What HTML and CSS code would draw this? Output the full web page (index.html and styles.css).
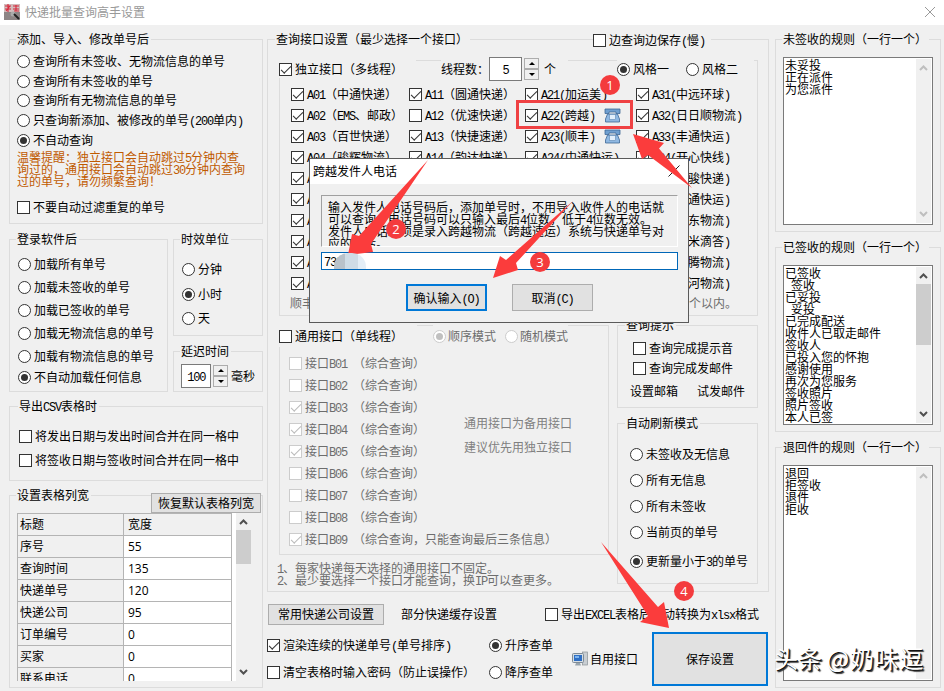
FILE: index.html
```html
<!DOCTYPE html>
<html lang="zh-CN">
<head>
    <meta charset="UTF-8">
    <title>快递批量查询高手设置</title>
    <link rel="stylesheet" href="styles.css">
</head>
<body>
    <header class="titlebar">
        <svg class="app-icon" width="16" height="16" viewBox="0 0 16 16">
            <rect width="16" height="16" fill="#8d8585"/>
            <rect width="16" height="8" fill="#d3bcbc"/>
            <path d="M1 2h6M4 0v8M1 5h6M2 7l4-5M9 2h6M12 1v6M9 5h6M10 7h5" stroke="#d8283c" stroke-width="1.1"/>
            <circle cx="9" cy="10" r="2.5" fill="#aaa"/>
            <path d="M10 10l5 5" stroke="#222" stroke-width="2"/>
        </svg>
        <span class="title">快递批量查询高手设置</span>
        <svg class="close" width="12" height="12" viewBox="0 0 12 12"><path d="M1 1l10 10M11 1L1 11" stroke="#999"/></svg>
    </header>

    <main>
        <!-- Left column -->
        <div class="col left">
            <fieldset class="after-add">
                <legend>添加、导入、修改单号后</legend>
                <label class="opt"><i class="radio"></i>查询所有未签收、无物流信息的单号</label>
                <label class="opt"><i class="radio"></i>查询所有未签收的单号</label>
                <label class="opt"><i class="radio"></i>查询所有无物流信息的单号</label>
                <label class="opt"><i class="radio"></i>只查询新添加、被修改的单号(200单内)</label>
                <label class="opt"><i class="radio on"></i>不自动查询</label>
                <p class="warning">温馨提醒：独立接口会自动跳过5分钟内查<br>询过的，通用接口会自动跳过30分钟内查询<br>过的单号，请勿频繁查询！</p>
                <label class="opt"><i class="box"></i>不要自动过滤重复的单号</label>
            </fieldset>

            <div class="split">
                <fieldset class="login">
                    <legend>登录软件后</legend>
                    <label class="opt"><i class="radio"></i>加载所有单号</label>
                    <label class="opt"><i class="radio"></i>加载未签收的单号</label>
                    <label class="opt"><i class="radio"></i>加载已签收的单号</label>
                    <label class="opt"><i class="radio"></i>加载无物流信息的单号</label>
                    <label class="opt"><i class="radio"></i>加载有物流信息的单号</label>
                    <label class="opt last"><i class="radio on"></i>不自动加载任何信息</label>
                </fieldset>
                <div class="units">
                    <fieldset class="unit">
                        <legend>时效单位</legend>
                        <label class="opt"><i class="radio"></i>分钟</label>
                        <label class="opt"><i class="radio on"></i>小时</label>
                        <label class="opt"><i class="radio"></i>天</label>
                    </fieldset>
                    <fieldset class="delay">
                        <legend>延迟时间</legend>
                        <div class="spin-row">
                            <span class="num">100</span><span class="spin"><b></b><b></b></span>
                            <span>毫秒</span>
                        </div>
                    </fieldset>
                </div>
            </div>

            <fieldset class="csv">
                <legend>导出CSV表格时</legend>
                <label class="opt"><i class="box"></i>将发出日期与发出时间合并在同一格中</label>
                <label class="opt"><i class="box"></i>将签收日期与签收时间合并在同一格中</label>
            </fieldset>

            <fieldset class="widths">
                <legend>设置表格列宽</legend>
                <button class="btn reset">恢复默认表格列宽</button>
                <div class="grid-wrap">
                    <table data-plain>
                        <tr class="head"><td>标题</td><td>宽度</td></tr>
                        <tr><td>序号</td><td>55</td></tr>
                        <tr><td>查询时间</td><td>135</td></tr>
                        <tr><td>快递单号</td><td>120</td></tr>
                        <tr><td>快递公司</td><td>95</td></tr>
                        <tr><td>订单编号</td><td>0</td></tr>
                        <tr><td>买家</td><td>0</td></tr>
                        <tr><td>联系电话</td><td>0</td></tr>
                    </table>
                    <div class="scroll">
                        <svg width="9" height="6"><path d="M1 5l3.500-3.500L8 5"/></svg>
                        <div class="thumb"></div>
                        <svg width="9" height="6"><path d="M1 1l3.500 3.500L8 1"/></svg>
                    </div>
                </div>
            </fieldset>
        </div>

        <!-- Middle column -->
        <div class="col middle">
            <fieldset class="api">
                <legend>查询接口设置（最少选择一个接口）</legend>
                <label class="opt save-live"><i class="box"></i>边查询边保存(慢)</label>

                <section class="frame single">
                    <div class="bar">
                        <label class="opt main"><i class="box on"></i>独立接口（多线程）</label>
                        <div class="threads">
                            <span>线程数：</span>
                            <span class="num">5</span><span class="spin"><b></b><b></b></span>
                            <span>个</span>
                        </div>
                        <div class="style-pick">
                            <label class="opt"><i class="radio on"></i>风格一</label>
                            <label class="opt"><i class="radio"></i>风格二</label>
                        </div>
                    </div>
                    <div class="api-grid" id="api-grid"></div>
                    <div class="api-note"><span>顺丰</span><span>个以内。</span></div>
                </section>

                <div class="lower">
                    <section class="frame common">
                        <div class="bar">
                            <label class="opt main"><i class="box"></i>通用接口（单线程）</label>
                            <div class="mode">
                                <label class="opt off"><i class="radio on"></i>顺序模式</label>
                                <label class="opt off"><i class="radio"></i>随机模式</label>
                            </div>
                        </div>
                        <div class="common-body">
                            <div class="common-list" id="common-list"></div>
                            <div class="backup-note">通用接口为备用接口<br>建议优先用独立接口</div>
                        </div>
                    </section>
                    <div class="side">
                        <fieldset class="hint">
                            <legend>查询提示</legend>
                            <label class="opt"><i class="box"></i>查询完成提示音</label>
                            <label class="opt"><i class="box"></i>查询完成发邮件</label>
                            <div class="links"><span>设置邮箱</span><span>试发邮件</span></div>
                        </fieldset>
                        <fieldset class="refresh">
                            <legend>自动刷新模式</legend>
                            <label class="opt"><i class="radio"></i>未签收及无信息</label>
                            <label class="opt"><i class="radio"></i>所有无信息</label>
                            <label class="opt"><i class="radio"></i>所有未签收</label>
                            <label class="opt"><i class="radio"></i>当前页的单号</label>
                            <label class="opt last"><i class="radio on"></i>更新量小于3的单号</label>
                        </fieldset>
                    </div>
                </div>
                <p class="api-tips">1、每家快递每天选择的通用接口不固定。<br>2、最少要选择一个接口才能查询，换IP可以查更多。</p>
            </fieldset>

            <div class="tools">
                <button class="btn">常用快递公司设置</button>
                <span class="cache">部分快递缓存设置</span>
                <label class="opt"><i class="box"></i>导出EXCEL表格后自动转换为xlsx格式</label>
            </div>
            <div class="footer">
                <div class="checks">
                    <label class="opt"><i class="box on"></i>渲染连续的快递单号(单号排序)</label>
                    <label class="opt"><i class="box"></i>清空表格时输入密码（防止误操作）</label>
                </div>
                <div class="order">
                    <label class="opt"><i class="radio on"></i>升序查单</label>
                    <label class="opt"><i class="radio"></i>降序查单</label>
                </div>
                <div class="own-api">
                    <svg width="16" height="16" viewBox="0 0 16 16">
                        <rect x="10.500" y="1" width="5" height="13" fill="#c9ced2" stroke="#8b9297" stroke-width=".7"/>
                        <rect x=".5" y="2.500" width="11" height="9" rx="1" fill="#d5dde3" stroke="#7e8b96"/>
                        <rect x="2" y="4" width="8" height="6" fill="#2f6fc4"/>
                        <path d="M3 5h4v2H3z" fill="#7db4ef"/>
                        <path d="M4 12h4l1 2.500H3z" fill="#9aa5ad"/>
                    </svg>
                    <span>自用接口</span>
                </div>
                <button class="btn primary save">保存设置</button>
            </div>
        </div>

        <!-- Right column -->
        <div class="col right">
            <fieldset class="rule r1">
                <legend>未签收的规则（一行一个）</legend>
                <div class="area">
                    <pre>未妥投
正在派件
为您派件</pre>
                    <div class="scroll dim">
                        <svg width="9" height="6"><path d="M1 5l3.500-3.500L8 5"/></svg>
                        <svg width="9" height="6"><path d="M1 1l3.500 3.500L8 1"/></svg>
                    </div>
                </div>
            </fieldset>
            <fieldset class="rule r2">
                <legend>已签收的规则（一行一个）</legend>
                <div class="area">
                    <pre>已签收
 签收
已妥投
 妥投
已完成配送
收件人已取走邮件
签收人
已投入您的怀抱
感谢使用
再次为您服务
签收照片
照片签收
本人已签</pre>
                    <div class="scroll">
                        <svg width="9" height="6"><path d="M1 5l3.500-3.500L8 5"/></svg>
                        <div class="thumb"></div>
                        <svg width="9" height="6"><path d="M1 1l3.500 3.500L8 1"/></svg>
                    </div>
                </div>
            </fieldset>
            <fieldset class="rule r3">
                <legend>退回件的规则（一行一个）</legend>
                <div class="area">
                    <pre>退回
拒签收
退件
拒收</pre>
                    <div class="scroll dim">
                        <svg width="9" height="6"><path d="M1 5l3.500-3.500L8 5"/></svg>
                    </div>
                </div>
            </fieldset>
        </div>
    </main>

    <!-- Sender phone dialog -->
    <div class="dialog">
        <div class="dialog-title">
            <span>跨越发件人电话</span>
            <svg width="12" height="12" viewBox="0 0 12 12"><path d="M.5 .5l11 11M11.500 .5l-11 11" stroke="#222"/></svg>
        </div>
        <div class="dialog-text">输入发件人电话号码后，添加单号时，不用导入收件人的电话就<br>可以查询，电话号码可以只输入最后4位数，低于4位数无效。<br>发件人电话必须是录入跨越物流（跨越速运）系统与快递单号对<br>应的电话。</div>
        <div class="dialog-input"><span>733</span><i class="mask"></i></div>
        <div class="dialog-buttons">
            <button class="btn primary">确认输入(O)</button>
            <button class="btn">取消(C)</button>
        </div>
    </div>

    <!-- Step annotations -->
    <div class="mark"></div>
    <svg class="arrows" width="944" height="691" viewBox="0 0 944 691">
        <path d="M633 134l31 9-5 5.500L692 188l-44-33-6 4z"/>
        <path d="M348 255l4-21 7 2L428 160l-57 84 2 8z"/>
        <path d="M493 278l7-22 6 4L573 201l-57 62 2 7z"/>
        <path d="M669 628l-29-6 8-6L601 542l57 65 6-5z"/>
    </svg>
    <b class="step s1">1</b>
    <b class="step s2">2</b>
    <b class="step s3">3</b>
    <b class="step s4">4</b>
    <div class="watermark" data-plain>头条 <span>@奶味逗</span></div>

    <script src="script.js"></script>
</body>
</html>
```
FILE: styles.css
```css
* {
    box-sizing: border-box;
}

body {
    position: relative;
    width: 944px;
    height: 691px;
    margin: 0;
    overflow: hidden;
    background: #f0f0f0;
    color: #000;
    font: 12px/14px "Noto Sans CJK SC", sans-serif;
    white-space: nowrap;
}

p, pre {
    margin: 0;
    font: inherit;
}

/* half-width characters, 6px each */
.en {
    font-family: "Liberation Mono", monospace;
    letter-spacing: -1.2px;
    line-height: 0;
    white-space: pre;
}

/* Title bar */
.titlebar {
    display: flex;
    align-items: center;
    height: 25px;
    padding: 0 8px 2px 4px;
    background: #fff;
}

.title {
    flex: 1;
    margin-left: 5px;
    color: #999;
}

/* Columns */
main {
    display: flex;
    height: 666px;
    padding-left: 9px;
}

.left { width: 254px; }
.middle { width: 502px; margin-left: 4px; }
.right { width: 166px; margin-left: 6px; }

fieldset {
    position: relative;
    min-width: 0;
    margin: 0;
    padding: 0 7px;
    border: 1px solid #dcdcdc;
}

legend {
    height: 14px;
    margin-left: -1px;
    padding: 0 2px 0 1px;
}

/* Options */
.opt {
    display: block;
    height: 20px;
    line-height: 20px;
}

.radio, .box {
    position: relative;
    display: inline-block;
    width: 13px;
    height: 13px;
    margin-right: 3px;
    border: 1px solid #333;
    background: #fff;
    vertical-align: -2px;
}

.radio {
    border-radius: 50%;
}

.radio.on::after {
    content: "";
    position: absolute;
    inset: 2px;
    border-radius: 50%;
    background: #333;
}

.box.on::after {
    content: "";
    position: absolute;
    left: 1px;
    top: 2px;
    width: 9px;
    height: 4px;
    border: solid #333;
    border-width: 0 0 1.5px 1.5px;
    transform: rotate(-45deg);
}

.off {
    color: #6d6d6d;
}

.off .radio, .off .box {
    border-color: #ccc;
}

.off .radio.on::after {
    background: #c0c0c0;
}

.off .box.on::after {
    border-color: #bbb;
}

/* Buttons and number boxes */
.btn {
    padding: 0;
    border: 1px solid #adadad;
    background: #e1e1e1;
    color: #000;
    font: inherit;
}

.btn.primary {
    border: 2px solid #0078d7;
}

.num {
    display: inline-block;
    height: 24px;
    border: 1px solid #7a7a7a;
    background: #fff;
    line-height: 22px;
    text-align: center;
}

.spin {
    display: flex;
    flex-direction: column;
    width: 15px;
    height: 22px;
    margin: 0 3px 0 2px;
}

.spin b {
    display: flex;
    flex: 1;
    align-items: center;
    justify-content: center;
    border: 1px solid #adadad;
}

.spin b::after {
    content: "";
    border: 3px solid transparent;
    border-top-width: 0;
    border-bottom-color: #000;
}

.spin b:last-child::after {
    transform: rotate(180deg);
}

/* Scroll bars */
.scroll {
    display: flex;
    flex-direction: column;
    align-items: center;
    justify-content: space-between;
    width: 15px;
    padding: 6px 0;
    background: #f0f0f0;
}

.scroll path {
    fill: none;
    stroke: #505050;
    stroke-width: 2;
}

.scroll.dim path {
    stroke: #bfbfbf;
}

.thumb {
    width: 15px;
    background: #cdcdcd;
}

.scroll svg:last-child:not(:first-child) {
    margin-top: auto;
}

/* Left column */
.after-add {
    height: 192px;
    margin-top: 7px;
    padding-top: 5px;
}

.after-add .opt {
    height: 19.7px;
}

.warning {
    margin: 2px 0 10px;
    color: #c05a00;
    line-height: 12px;
}

.split {
    display: flex;
    gap: 5px;
    margin-top: 8px;
}

.login {
    width: 159px;
    height: 160px;
    padding-top: 7px;
}

.login .opt {
    height: 23px;
    line-height: 22px;
    padding-left: 1px;
}

.login .opt.last {
    line-height: 18px;
}

.units {
    width: 90px;
}

.unit {
    height: 104px;
    padding-top: 11px;
}

.unit .opt {
    height: 24.5px;
    line-height: 23px;
    padding-left: 1px;
}

.delay {
    height: 48px;
    margin-top: 8px;
    padding-top: 6px;
}

.spin-row {
    display: flex;
    align-items: center;
}

.spin-row .num {
    width: 31px;
}

.csv {
    height: 82px;
    margin-top: 7px;
    padding: 12px 9px 0;
}

.csv .opt {
    height: 24px;
    line-height: 22px;
}

.widths {
    height: 200px;
    margin-top: 7px;
    padding-top: 11px;
}

.reset {
    position: absolute;
    right: 1px;
    top: -9px;
    width: 110px;
    height: 20px;
    line-height: 18px;
}

.grid-wrap {
    display: flex;
    justify-content: space-between;
    width: 234px;
    height: 168px;
    overflow: hidden;
    background: #fff;
}

table {
    width: 215px;
    height: 177px;
    border-collapse: collapse;
    table-layout: fixed;
    font: 12px/14px "Open Sans", "Noto Sans CJK SC", sans-serif;
}

td {
    height: 22px;
    padding: 0 4px;
    border: 1px solid #b4b4b4;
}

td:first-child {
    width: 106px;
    padding-left: 2px;
    background: #f0f0f0;
}

.head td {
    background: #f0f0f0;
}

.widths .thumb {
    height: 34px;
    margin-top: 5px;
}

/* Query interfaces */
.api {
    height: 560px;
    margin-top: 7px;
    padding: 14px 10px 0 11px;
}

.api > legend {
    margin-left: -4px;
}

.save-live {
    position: absolute;
    left: 325px;
    top: -16px;
    height: 18px;
    padding-right: 6px;
    background: #f0f0f0;
}

.frame {
    border: 1px solid #dcdcdc;
}

.bar {
    display: flex;
    height: 17px;
}

.bar .opt {
    height: 18px;
    line-height: 18px;
}

.bar > * {
    background: #f0f0f0;
}

.bar .main {
    margin-left: -1px;
}

.single {
    width: 479px;
    height: 256px;
}

.single .bar {
    margin-top: -1px;
}

.single .main, .single .style-pick {
    width: 137px;
}

.threads {
    display: flex;
    align-items: center;
    width: 127px;
    margin: 0 49px 0 25px;
}

.threads .num {
    width: 33px;
}

.threads .spin {
    margin-right: 5px;
}

.style-pick {
    display: flex;
    gap: 17px;
}

.api-grid {
    display: grid;
    grid-template-columns: 118px 116px 111px 110px;
    grid-auto-rows: 21px;
    padding: 7px 0 0 11px;
}

.api-grid .opt {
    display: flex;
    align-items: center;
}

.api-grid .phone {
    margin-left: 9px;
}

.api-note {
    display: flex;
    justify-content: space-between;
    padding: 2px 20px 0 10px;
    color: #6d6d6d;
}

.lower {
    display: flex;
    justify-content: space-between;
    margin-top: 2px;
    width: 479px;
}

.common {
    width: 330px;
    height: 230px;
    margin-top: 7px;
}

.common .bar {
    height: 23px;
    margin-top: -1px;
}

.common .bar .opt {
    height: 22px;
    line-height: 22px;
}

.common .main {
    width: 138px;
}

.mode {
    display: flex;
    gap: 9px;
    margin-left: 16px;
}

.mode .radio {
    margin-right: 2px;
}

.common-body {
    display: flex;
    justify-content: space-between;
    padding: 4px 36px 0 9px;
}

.common-list {
    width: 150px;
}

.common-list .opt {
    height: 22px;
    line-height: 22px;
}

.backup-note {
    padding-top: 59px;
    color: #808080;
    line-height: 24px;
}

.side {
    width: 141px;
}

.hint {
    height: 90px;
    padding: 6px 12px 0 15px;
}

.hint legend {
    margin-left: -8px;
}

.links {
    display: flex;
    justify-content: space-between;
    margin: 6px 0 0 -3px;
}

.refresh {
    height: 168px;
    margin-top: 8px;
    padding: 11px 0 0 12px;
}

.refresh legend {
    margin-left: -5px;
}

.refresh .opt {
    height: 26px;
    line-height: 25px;
}

.refresh .last {
    margin-top: 3px;
}

.api-tips {
    margin: -22px 0 0 -2px;
    color: #6d6d6d;
    line-height: 12px;
}

.tools {
    display: flex;
    align-items: center;
    height: 22px;
    margin: 11px 0 0 1px;
}

.tools .btn {
    width: 116px;
    height: 21px;
}

.cache {
    width: 144px;
    margin-left: 17px;
}

.footer {
    display: flex;
    width: 501px;
    height: 54px;
    margin-top: 7px;
}

.checks {
    width: 222px;
}

.footer .opt {
    height: 27px;
    line-height: 26px;
}

.order {
    width: 83px;
}

.own-api {
    display: flex;
    flex: 1;
    align-items: center;
    gap: 2px;
}

.save {
    width: 116px;
    height: 54px;
}

/* Rules */
.rule {
    padding: 11px 7px 0;
}

.r1 { height: 200px; margin-top: 7px; }
.r2 { height: 192px; margin-top: 8px; }
.r3 { height: 248px; margin-top: 8px; }

.area {
    display: flex;
    justify-content: space-between;
    width: 150px;
    height: 168px;
    padding: 1px;
    overflow: hidden;
    border: 1px solid #7a7a7a;
    background: #fff;
}

.r2 .area { height: 160px; }
.r3 .area { height: 216px; }

.area pre {
    line-height: 12px;
}

.area .thumb {
    height: 61px;
    margin-top: 5px;
}

/* Dialog */
.dialog {
    position: absolute;
    left: 309px;
    top: 158px;
    width: 380px;
    height: 165px;
    border: 1px solid #5a5a5a;
    background: #f0f0f0;
}

.dialog-title {
    display: flex;
    align-items: center;
    justify-content: space-between;
    height: 25px;
    padding: 0 8px 1px 3px;
    background: #fff;
}

.dialog-text {
    width: 357px;
    height: 52px;
    margin: 11px 0 5px 11px;
    padding: 5px 6px;
    overflow: hidden;
    border: 1px solid;
    border-color: #a0a0a0 #fff #fff #a0a0a0;
    line-height: 12px;
}

.dialog-input {
    display: flex;
    align-items: center;
    width: 357px;
    height: 18px;
    margin-left: 11px;
    padding-left: 2px;
    border: 1px solid #0067b8;
    background: #fff;
}

/* pixelated cover over the phone number */
.mask {
    z-index: 1;
    width: 32px;
    height: 16px;
    margin-left: -8px;
    border-radius: 14px 14px 0 0;
    background: linear-gradient(90deg, #b9c2ca 11px, #cfdce6 11px 24px, #e4eef6 24px);
}

.dialog-buttons {
    display: flex;
    gap: 25px;
    padding: 14px 0 0 96px;
}

.dialog-buttons .btn {
    width: 81px;
    height: 27px;
}

/* Annotations */
.mark {
    position: absolute;
    left: 516px;
    top: 100px;
    width: 117px;
    height: 29px;
    border: 3px solid #ef4143;
}

.arrows {
    position: absolute;
    left: 0;
    top: 0;
    fill: #fb3c3c;
}

.step {
    position: absolute;
    width: 20px;
    height: 20px;
    border-radius: 50%;
    background: #f43b3d;
    color: #fff;
    font: 13px/20px "Open Sans", sans-serif;
    text-align: center;
}

.s1 { left: 600px; top: 75px; }
.s2 { left: 386px; top: 219px; }
.s3 { left: 530px; top: 252px; }
.s4 { left: 674px; top: 581px; }

.watermark {
    position: absolute;
    left: 774px;
    top: 642px;
    color: #fff;
    font-size: 24px;
    line-height: 32px;
    text-shadow: 1px 1px 0 #111, 2px 2px 1px #333;
}

.watermark span {
    margin-left: -1px;
    letter-spacing: .8px;
}
```
FILE: script.js
```javascript
// independent interfaces, row by row; empty names are skipped
const rows = [
    ['A01（中通快递）', 'A11（圆通快递）', 'A21(加运美)', 'A31(中远环球)'],
    ['A02（EMS、邮政）', '-A12（优速快递）', 'A22(跨越)', 'A32(日日顺物流)'],
    ['A03（百世快递）', 'A13（快捷速递）', 'A23(顺丰)', 'A33(丰通快运)'],
    ['A04（骏辉物流）', 'A14（韵达快递）', 'A24(中通快运)', 'A34(开心快线)'],
    ['A05', '', '', 'A35(急骏快递)'],
    ['A06', '', '', 'A36(速通快运)'],
    ['A07', '', '', 'A37(京东物流)'],
    ['A08', '', '', 'A38(小米滴答)'],
    ['A09', '', '', 'A39(安腾物流)'],
    ['A10', '', '', 'A40(黄河物流)']
];

const phone = `<svg class="phone" width="17" height="15" viewBox="0 0 17 15">
    <path d="M3.500 6h10l2 5v3h-14v-3z" fill="#8fb8e2" stroke="#3d6795" stroke-width=".8"/>
    <path d="M1 1h15v4.500h-4V4H5v1.500H1z" fill="#6f9fd0" stroke="#3d6795" stroke-width=".8"/>
    <rect x="5.500" y="6.500" width="6" height="5" fill="#e2effb" stroke="#5c87b5" stroke-width=".6"/></svg>`;

document.getElementById('api-grid').innerHTML = rows.flat().map(name => {
    if (!name) return '<span></span>';
    const off = name.startsWith('-');
    const icon = /A22|A23/.test(name) ? phone : '';
    return `<label class="opt"><i class="box ${off ? '' : 'on'}"></i><span>${name.replace('-', '')}</span>${icon}</label>`;
}).join('');

const checked = [3, 4, 5, 9];
let list = '';
for (let i = 1; i <= 9; i++) {
    const note = i === 9 ? '综合查询，只能查询最后三条信息' : '综合查询';
    list += `<label class="opt off"><i class="box ${checked.includes(i) ? 'on' : ''}"></i>接口B0${i} （${note}）</label>`;
}
document.getElementById('common-list').innerHTML = list;

// wrap half-width runs so they keep the 6px pitch
const walker = document.createTreeWalker(document.body, NodeFilter.SHOW_TEXT);
const nodes = [];
while (walker.nextNode()) nodes.push(walker.currentNode);
nodes.forEach(node => {
    const parent = node.parentElement;
    if (!node.data.trim() || parent.closest('[data-plain], script, .step')) return;
    if (!/[\x20-\x7e]/.test(node.data)) return;
    const part = document.createElement('template');
    part.innerHTML = node.data.replace(/[\x20-\x7e]+/g, '<span class="en">$&</span>');
    node.replaceWith(part.content);
});
```
